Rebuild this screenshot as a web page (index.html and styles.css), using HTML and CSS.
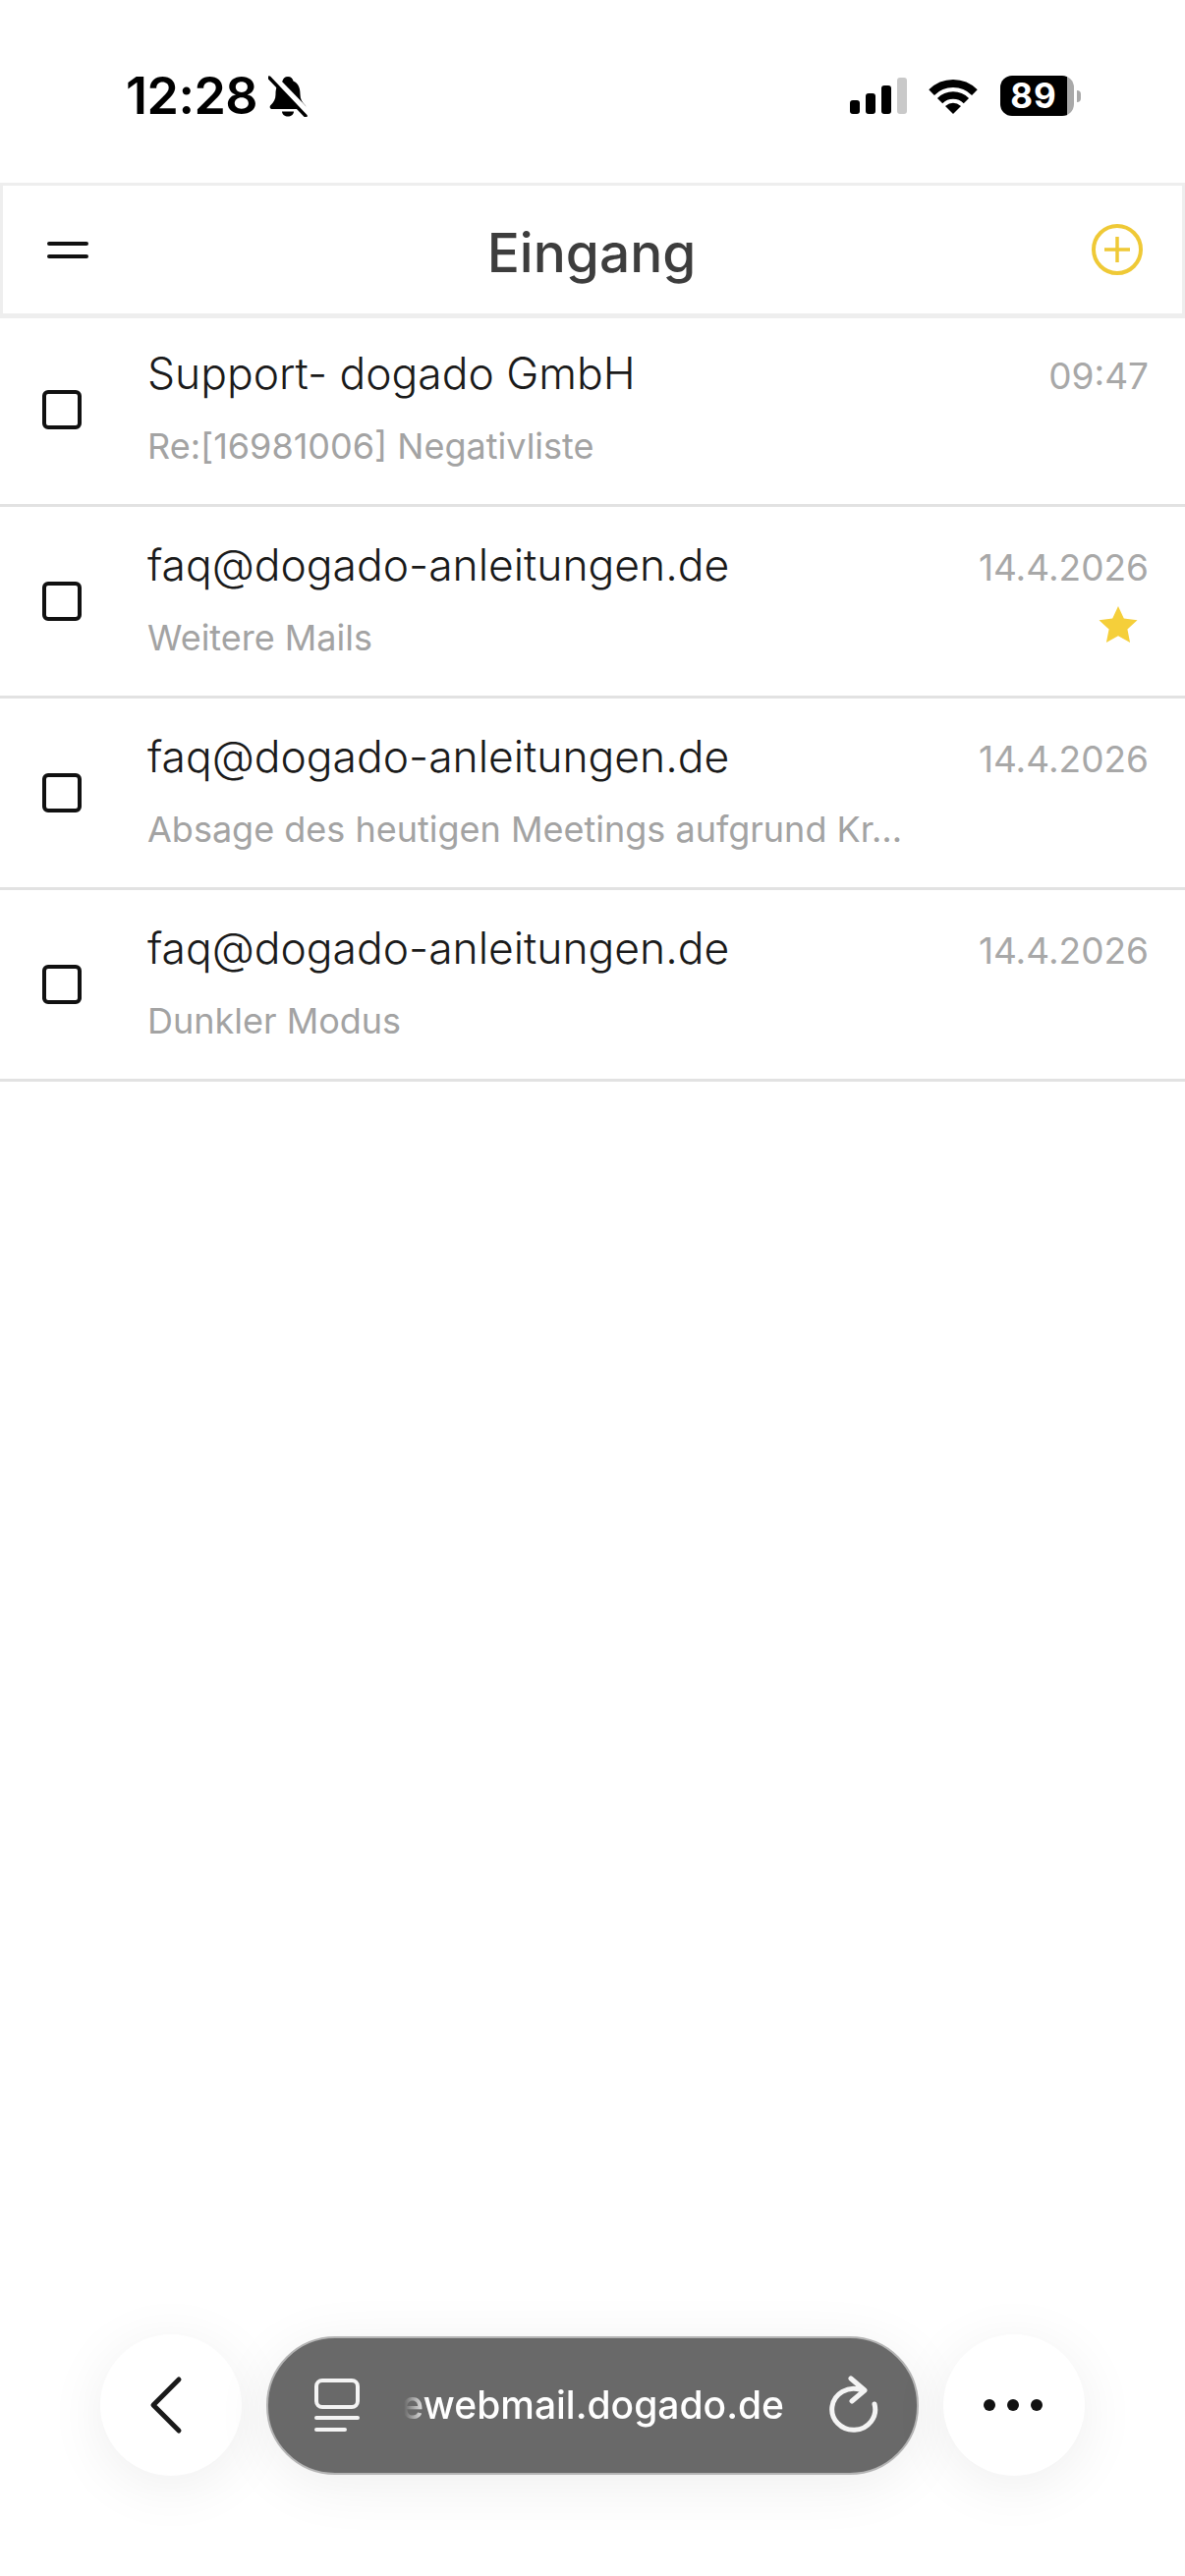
FILE: index.html
```html
<!DOCTYPE html>
<html lang="de">
<head>
    <meta charset="UTF-8">
    <meta name="viewport" content="width=device-width, initial-scale=1.0">
    <title>Eingang</title>
    <link rel="stylesheet" href="styles.css">
</head>
<body>
    <div class="status">
        <div class="status-left">
            <span class="time">12:28</span>
            <svg class="bell" viewBox="0 0 40 42">
                <path d="M20 1c-3 0-5 2-5.500 4.500C9 8 7.500 13 7.500 19c0 5-2 8-5 11-1.500 1.500-1 4 1.500 4h32c2.500 0 3-2.500 1.500-4-3-3-5-6-5-11 0-6-1.500-11-7-13.500C25 3 23 1 20 1z" fill="#000"/>
                <path d="M14 36.500h12c0 3-3 5-6 5s-6-2-6-5z" fill="#000"/>
                <path d="M4 0l36 37" stroke="#fff" stroke-width="6" fill="none"/>
                <path d="M1 2l37 39" stroke="#000" stroke-width="3.400" stroke-linecap="round" fill="none"/>
            </svg>
        </div>
        <div class="status-right">
            <div class="signal">
                <i class="bar bar-1"></i>
                <i class="bar bar-2"></i>
                <i class="bar bar-3"></i>
                <i class="bar bar-4"></i>
            </div>
            <svg class="wifi" viewBox="0 0 50 37">
                <path d="M3.100 15.100A31 31 0 0 1 46.900 15.100" stroke="#000" stroke-width="8" fill="none"/>
                <path d="M11.600 23.600A19 19 0 0 1 38.400 23.600" stroke="#000" stroke-width="7.500" fill="none"/>
                <path d="M25 37L17 29Q25 22.500 33 29Z" fill="#000"/>
            </svg>
            <div class="battery"><span class="battery-level">89</span></div>
            <i class="battery-nub"></i>
        </div>
    </div>

    <div class="topbar">
        <div class="menu"><i></i><i></i></div>
        <h1>Eingang</h1>
        <svg class="add" viewBox="0 0 52 52">
            <circle cx="26" cy="26" r="24" stroke="#efc936" stroke-width="4" fill="none"/>
            <path d="M13 26h26M26 13v26" stroke="#efc936" stroke-width="3.500" fill="none"/>
        </svg>
    </div>

    <div class="mails">
        <div class="mail">
            <span class="check"></span>
            <div class="mail-text">
                <p class="sender">Support- dogado GmbH</p>
                <p class="subject">Re:[16981006] Negativliste</p>
            </div>
            <div class="mail-meta"><span class="date">09:47</span></div>
        </div>
        <div class="mail">
            <span class="check"></span>
            <div class="mail-text">
                <p class="sender">faq@dogado-anleitungen.de</p>
                <p class="subject">Weitere Mails</p>
            </div>
            <div class="mail-meta">
                <span class="date">14.4.2026</span>
                <svg class="star" viewBox="0 0 40 40">
                    <path d="M20 1l5.800 12.600 13.700 1.600-10.100 9.300 2.700 13.500L20 31.300 7.900 38l2.700-13.500L.5 15.200l13.700-1.600z" fill="#f5cf3a"/>
                </svg>
            </div>
        </div>
        <div class="mail">
            <span class="check"></span>
            <div class="mail-text">
                <p class="sender">faq@dogado-anleitungen.de</p>
                <p class="subject">Absage des heutigen Meetings aufgrund Kr…</p>
            </div>
            <div class="mail-meta"><span class="date">14.4.2026</span></div>
        </div>
        <div class="mail">
            <span class="check"></span>
            <div class="mail-text">
                <p class="sender">faq@dogado-anleitungen.de</p>
                <p class="subject">Dunkler Modus</p>
            </div>
            <div class="mail-meta"><span class="date">14.4.2026</span></div>
        </div>
    </div>

    <div class="toolbar">
        <div class="round">
            <svg class="back" viewBox="0 0 36 60">
                <path d="M31 4L5 30l26 26" stroke="#1a1a1a" stroke-width="5" stroke-linecap="round" stroke-linejoin="round" fill="none"/>
            </svg>
        </div>
        <div class="pill">
            <svg class="tabs" viewBox="0 0 46 54">
                <rect x="2" y="2" width="42" height="27" rx="6" stroke="#f4f4f4" stroke-width="4" fill="none"/>
                <path d="M2 40h42" stroke="#f4f4f4" stroke-width="4" stroke-linecap="round"/>
                <path d="M2 52h29" stroke="#f4f4f4" stroke-width="4" stroke-linecap="round"/>
            </svg>
            <div class="url"><span>onewebmail.dogado.de</span></div>
            <svg class="reload" viewBox="0 0 50 60">
                <path d="M46 29A22 21 0 1 1 32 14.500" stroke="#f4f4f4" stroke-width="5" stroke-linecap="round" fill="none"/>
                <path d="M22 3l14 12-13 11" stroke="#f4f4f4" stroke-width="5" stroke-linecap="round" stroke-linejoin="round" fill="none"/>
            </svg>
        </div>
        <div class="round">
            <div class="dots"><i></i><i></i><i></i></div>
        </div>
    </div>
</body>
</html>
```

FILE: styles.css
```css
html, body {
    margin: 0;
    padding: 0;
}
body {
    position: relative;
    width: 1206px;
    height: 2622px;
    overflow: hidden;
    background: #fff;
    font-family: Inter, "Liberation Sans", sans-serif;
}
p, h1 {
    margin: 0;
}

/* phone status bar */
.status {
    height: 186px;
    box-sizing: border-box;
    padding: 77px 106px 0 128px;
    display: flex;
    justify-content: space-between;
    align-items: flex-start;
}
.status-left {
    display: flex;
    align-items: center;
    gap: 11px;
}
.time {
    font-size: 52px;
    line-height: 42px;
    font-weight: 600;
    color: #000;
    letter-spacing: -0.5px;
}
.bell {
    width: 40px;
    height: 42px;
}
.status-right {
    display: flex;
    align-items: center;
    height: 41px;
}
.signal {
    display: flex;
    align-items: flex-end;
    gap: 6px;
    height: 37px;
    margin-right: 22px;
}
.bar {
    display: block;
    width: 10px;
    border-radius: 3px;
    background: #000;
}
.bar-1 { height: 14px; }
.bar-2 { height: 21px; }
.bar-3 { height: 29px; }
.bar-4 { height: 37px; background: #c9c9c9; }
.wifi {
    width: 50px;
    height: 37px;
    margin-right: 23px;
}
.battery {
    width: 75px;
    height: 41px;
    border-radius: 12px;
    background: linear-gradient(to right, #000 68px, #a9a9a9 68px);
    color: #fff;
    overflow: hidden;
}
.battery-level {
    display: block;
    width: 68px;
    text-align: center;
    font-size: 35px;
    line-height: 41px;
    font-weight: 700;
    letter-spacing: 1px;
}
.battery-nub {
    display: block;
    width: 4px;
    height: 12px;
    margin-left: 3px;
    border-radius: 0 4px 4px 0;
    background: #a9a9a9;
}

/* title bar */
.topbar {
    height: 138px;
    box-sizing: border-box;
    border: 3px solid #eeeeee;
    border-bottom-width: 5px;
    padding: 0 40px 0 45px;
    display: flex;
    align-items: center;
    justify-content: space-between;
}
.menu {
    width: 42px;
    display: flex;
    flex-direction: column;
    gap: 9px;
}
.menu i {
    display: block;
    height: 4px;
    border-radius: 2px;
    background: #111;
}
.topbar h1 {
    margin-left: 3px;
    padding-top: 6px;
    font-size: 55px;
    line-height: 70px;
    font-weight: 500;
    color: #3d3d3d;
}
.add {
    width: 52px;
    height: 52px;
}

/* mail list */
.mails {
    margin-top: -3px;
}
.mail {
    height: 195px;
    box-sizing: border-box;
    border-bottom: 3px solid #e2e2e2;
    padding: 0 37px 0 43px;
    display: flex;
    align-items: center;
}
.check {
    flex: none;
    width: 40px;
    height: 40px;
    box-sizing: border-box;
    border: 4px solid #111;
    border-radius: 6px;
    margin-right: 67px;
}
.mail-text {
    flex: 1;
    min-width: 0;
    align-self: flex-start;
    padding-top: 31px;
}
.sender {
    font-size: 44.400px;
    line-height: 56px;
    font-weight: 300;
    color: #1a1a1a;
    white-space: nowrap;
}
.subject {
    margin-top: 26px;
    font-size: 36px;
    line-height: 40px;
    color: #a3a3a3;
    white-space: nowrap;
}
.mail-meta {
    align-self: flex-start;
    padding-top: 37px;
    display: flex;
    flex-direction: column;
    align-items: flex-end;
}
.date {
    font-size: 37px;
    line-height: 50px;
    color: #a8a8a8;
}
.star {
    width: 40px;
    height: 40px;
    margin: 13px 11px 0 0;
}

/* browser controls, floating over the page */
.toolbar {
    position: absolute;
    left: 0;
    right: 0;
    bottom: 102px;
    display: flex;
    justify-content: center;
    align-items: center;
    gap: 25px;
}
.round {
    width: 144px;
    height: 144px;
    border-radius: 50%;
    background: #fff;
    box-shadow: 0 10px 60px rgba(0, 0, 0, 0.07);
    display: flex;
    align-items: center;
    justify-content: center;
}
.back {
    width: 36px;
    height: 60px;
    margin-right: 10px;
}
.dots {
    display: flex;
    gap: 12px;
    margin-right: 3px;
}
.dots i {
    display: block;
    width: 12px;
    height: 12px;
    border-radius: 50%;
    background: #111;
}
.pill {
    width: 664px;
    height: 141px;
    box-sizing: border-box;
    border: 2px solid #b4b4b4;
    border-radius: 70px;
    background: #696969;
    box-shadow: 0 10px 60px rgba(0, 0, 0, 0.07);
    padding: 0 40px 0 47px;
    display: flex;
    align-items: center;
}
.tabs {
    flex: none;
    width: 46px;
    height: 54px;
}
.url {
    flex: none;
    width: 387px;
    margin-left: 45px;
    display: flex;
    justify-content: flex-end;
    overflow: hidden;
    white-space: nowrap;
    font-size: 39px;
    line-height: 60px;
    font-weight: 500;
    color: #fff;
    -webkit-mask-image: linear-gradient(to right, transparent, #000 24px);
    mask-image: linear-gradient(to right, transparent, #000 24px);
}
.reload {
    flex: none;
    width: 50px;
    height: 60px;
    margin-left: 46px;
}
```
